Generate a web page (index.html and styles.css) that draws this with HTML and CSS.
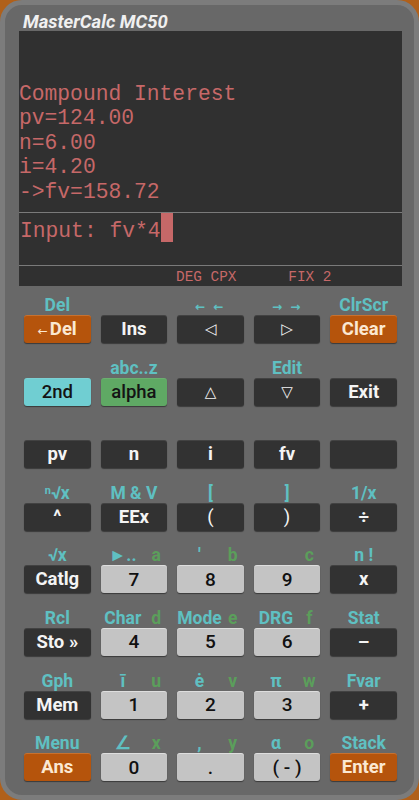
FILE: index.html
```html
<html>

<head>
    <link rel="stylesheet" href="styles.css">
</head>

<body>
    <main class="calc">
        <div class="title">MasterCalc MC50</div>

        <section class="screen">
            <div class="history">
                <div>Compound Interest</div>
                <div>pv=124.00</div>
                <div>n=6.00</div>
                <div>i=4.20</div>
                <div>-&gt;fv=158.72</div>
            </div>
            <div class="input">
                <span class="input-text">Input: fv*4</span><span class="cursor"></span>
            </div>
            <div class="status">DEG CPX      FIX 2</div>
        </section>

        <section class="keypad">
            <!-- row 1 -->
            <div class="key"><div class="label">Del</div><button class="btn orange"><span class="arrow">←</span>Del</button></div>
            <div class="key"><div class="label"></div><button class="btn">Ins</button></div>
            <div class="key"><div class="label small">← ←</div><button class="btn sym">◁</button></div>
            <div class="key"><div class="label small">→ →</div><button class="btn sym">▷</button></div>
            <div class="key"><div class="label">ClrScr</div><button class="btn orange">Clear</button></div>

            <!-- row 2 -->
            <div class="key"><div class="label"></div><button class="btn cyan">2nd</button></div>
            <div class="key"><div class="label">abc..z</div><button class="btn green">alpha</button></div>
            <div class="key"><div class="label"></div><button class="btn sym">△</button></div>
            <div class="key"><div class="label">Edit</div><button class="btn sym">▽</button></div>
            <div class="key"><div class="label"></div><button class="btn">Exit</button></div>

            <!-- row 3 -->
            <div class="key"><div class="label"></div><button class="btn">pv</button></div>
            <div class="key"><div class="label"></div><button class="btn">n</button></div>
            <div class="key"><div class="label"></div><button class="btn">i</button></div>
            <div class="key"><div class="label"></div><button class="btn">fv</button></div>
            <div class="key"><div class="label"></div><button class="btn"></button></div>

            <!-- row 4 -->
            <div class="key"><div class="label"><span class="sup">n</span>√x</div><button class="btn">^</button></div>
            <div class="key"><div class="label">M &amp; V</div><button class="btn">EEx</button></div>
            <div class="key"><div class="label">[</div><button class="btn thin">(</button></div>
            <div class="key"><div class="label">]</div><button class="btn thin">)</button></div>
            <div class="key"><div class="label">1/x</div><button class="btn">÷</button></div>

            <!-- row 5 -->
            <div class="key"><div class="label">√x</div><button class="btn">Catlg</button></div>
            <div class="key"><div class="label dual"><span>►..</span><span class="alpha">a</span></div><button class="btn light">7</button></div>
            <div class="key"><div class="label dual"><span>'</span><span class="alpha">b</span></div><button class="btn light">8</button></div>
            <div class="key"><div class="label dual"><span></span><span class="alpha">c</span></div><button class="btn light">9</button></div>
            <div class="key"><div class="label">n !</div><button class="btn">x</button></div>

            <!-- row 6 -->
            <div class="key"><div class="label">Rcl</div><button class="btn">Sto »</button></div>
            <div class="key"><div class="label dual"><span>Char</span><span class="alpha">d</span></div><button class="btn light">4</button></div>
            <div class="key"><div class="label dual"><span>Mode</span><span class="alpha">e</span></div><button class="btn light">5</button></div>
            <div class="key"><div class="label dual"><span>DRG</span><span class="alpha">f</span></div><button class="btn light">6</button></div>
            <div class="key"><div class="label">Stat</div><button class="btn">–</button></div>

            <!-- row 7 -->
            <div class="key"><div class="label">Gph</div><button class="btn">Mem</button></div>
            <div class="key"><div class="label dual"><span>ī</span><span class="alpha">u</span></div><button class="btn light">1</button></div>
            <div class="key"><div class="label dual"><span>ė</span><span class="alpha">v</span></div><button class="btn light">2</button></div>
            <div class="key"><div class="label dual"><span>π</span><span class="alpha">w</span></div><button class="btn light">3</button></div>
            <div class="key"><div class="label">Fvar</div><button class="btn">+</button></div>

            <!-- row 8 -->
            <div class="key"><div class="label">Menu</div><button class="btn orange">Ans</button></div>
            <div class="key"><div class="label dual"><span>∠</span><span class="alpha">x</span></div><button class="btn light">0</button></div>
            <div class="key"><div class="label dual"><span>,</span><span class="alpha">y</span></div><button class="btn light">.</button></div>
            <div class="key"><div class="label dual"><span>α</span><span class="alpha">o</span></div><button class="btn light">( - )</button></div>
            <div class="key"><div class="label">Stack</div><button class="btn orange">Enter</button></div>
        </section>
    </main>
</body>

</html>
```

FILE: styles.css
```css
html {
    background-color: #b0601a;
}

body {
    margin: 0;
    font-family: Roboto, 'Liberation Sans', sans-serif;
}

main.calc {
    box-sizing: border-box;
    width: 419px;
    height: 800px;
    padding: 0 12px 0 14px;
    background-color: #686868;
    border: 5px solid #7c7c7c;
    border-radius: 22px;
}

.title {
    box-sizing: border-box;
    height: 26px;
    padding: 8px 0 0 4px;
    color: #f0f0f0;
    font-size: 18.5px;
    font-style: italic;
    font-weight: 700;
    line-height: 18px;
}

/* screen */

section.screen {
    background-color: #303030;
    color: #c66868;
    font-family: 'Liberation Mono', 'DejaVu Sans Mono', monospace;
}

.history {
    box-sizing: border-box;
    height: 181px;
    display: flex;
    flex-direction: column;
    justify-content: flex-end;
    padding-bottom: 8px;
    font-size: 21.3px;
    line-height: 24.5px;
}

.input {
    box-sizing: border-box;
    height: 53px;
    display: flex;
    align-items: flex-start;
    border-top: 1px solid #7a7a7a;
    font-size: 21.3px;
    line-height: 24.5px;
}

.input-text {
    padding: 6px 0 0 1px;
    white-space: pre;
}

.cursor {
    width: 12.7px;
    height: 29px;
    background-color: #c66868;
}

.status {
    box-sizing: border-box;
    height: 20.7px;
    padding: 3px 0 0 157px;
    border-top: 1px solid #7a7a7a;
    font-size: 14.4px;
    line-height: 16px;
    white-space: pre;
    overflow: hidden;
}

/* keys */

section.keypad {
    display: grid;
    grid-template-columns: repeat(5, 1fr);
    gap: 15.6px 10px;
    margin-top: 10.3px;
    padding: 0 5px;
}

.key {
    display: flex;
    flex-direction: column;
}

.label {
    height: 19px;
    color: #5fc0c2;
    font-size: 17.5px;
    font-weight: 700;
    line-height: 19px;
    text-align: center;
    white-space: nowrap;
}

.label.small {
    font-family: 'DejaVu Sans', sans-serif;
    font-size: 12px;
    letter-spacing: 2px;
    line-height: 22px;
}

.label .sup {
    font-size: 11px;
    vertical-align: 5px;
    line-height: 0;
}

.label.dual {
    display: grid;
    grid-template-columns: 2fr 1fr;
}

.label .alpha {
    color: #5b9e5b;
}

.btn {
    height: 28px;
    padding: 0;
    border: none;
    border-radius: 3px;
    background-color: #323232;
    color: #f4f4f4;
    font-family: Roboto, 'Liberation Sans', sans-serif;
    font-size: 18.5px;
    font-weight: 700;
    box-shadow: inset 0 1px 0 rgba(255, 255, 255, 0.08), 0 1px 1px rgba(0, 0, 0, 0.45);
}

.btn.sym {
    font-family: 'DejaVu Sans', sans-serif;
    font-size: 15px;
    font-weight: 400;
}

.btn.thin {
    font-weight: 400;
}

.btn.orange {
    background-color: #b5540c;
    color: #fbe8d2;
    box-shadow: inset 0 1px 0 rgba(255, 200, 150, 0.25), 0 1px 1px rgba(0, 0, 0, 0.45);
}

.btn .arrow {
    font-family: 'DejaVu Sans', sans-serif;
    font-size: 12px;
    font-weight: 400;
    margin-right: 2px;
}

.btn.cyan {
    background-color: #70ced2;
    color: #141414;
    font-weight: 500;
}

.btn.green {
    background-color: #5fa964;
    color: #141414;
    font-weight: 500;
}

.btn.light {
    background-color: #c4c4c4;
    color: #111;
    font-size: 19px;
    font-weight: 500;
    box-shadow: inset 0 1px 0 rgba(255, 255, 255, 0.45), 0 1px 1px rgba(0, 0, 0, 0.45);
}
```
